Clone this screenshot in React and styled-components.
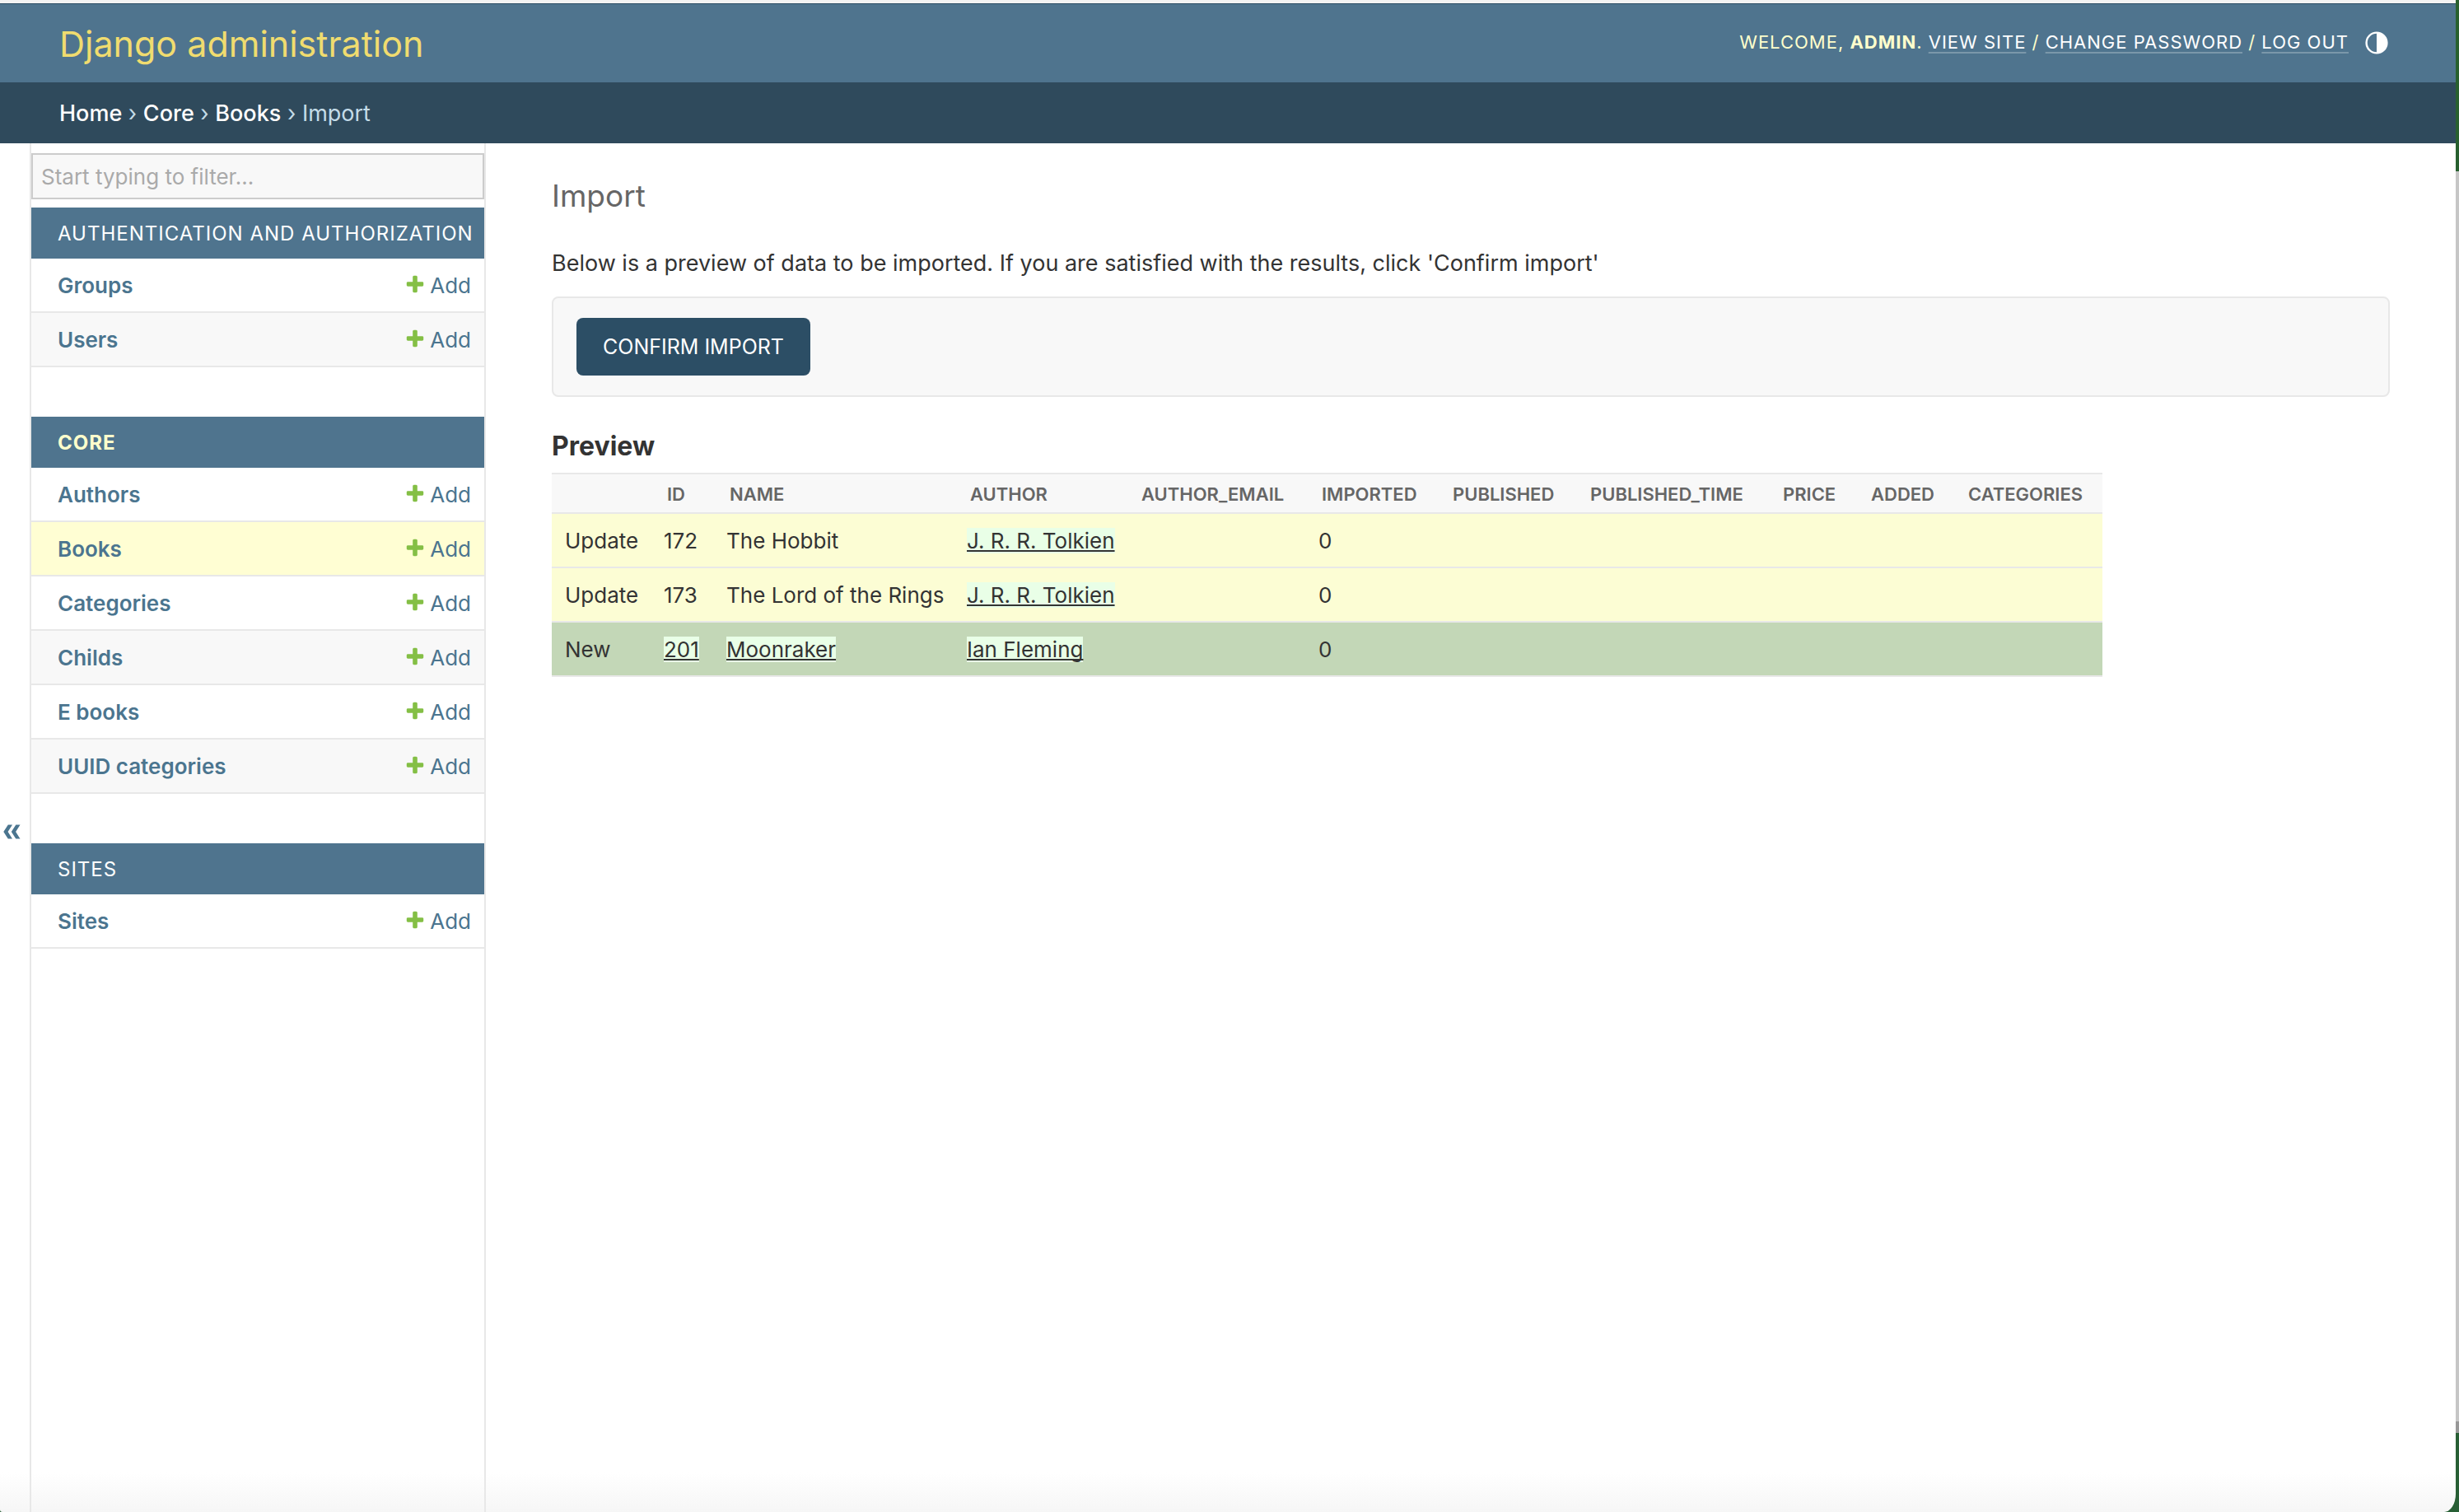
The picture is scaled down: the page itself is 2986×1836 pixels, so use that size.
import React from "react";
import styled, { createGlobalStyle } from "styled-components";

const color = {
  primary: "#4f748e",
  secondary: "#2f4a5c",
  button: "#2c4e65",
  accent: "#f0dc6f",
  pale: "#feffcc",
  link: "#4b758f",
  line: "#e8e8e8",
  soft: "#f8f8f8",
  text: "#333333",
  quiet: "#666666",
  add: "#84bf45",
};

const GlobalStyle = createGlobalStyle`
  *, *::before, *::after { box-sizing: border-box; }
  body {
    margin: 0;
    color: ${color.text};
    font-family: Inter, "Liberation Sans", sans-serif;
    font-size: 26px;
    line-height: 32px;
  }
  a { color: ${color.link}; text-decoration: none; }
  h1, h2, p, ul { margin: 0; padding: 0; }
  button, input { font: inherit; }
`;

const Desktop = styled.div`
  display: flex;
  min-height: 100vh;
  padding-right: 4px;
  background: linear-gradient(
    #28602f 208px,
    #c6c6c6 208px,
    #c6c6c6 calc(100% - 110px),
    #989898 calc(100% - 110px),
    #989898 calc(100% - 96px),
    #285f35 calc(100% - 96px)
  );
`;

const Window = styled.div`
  display: flex;
  flex-direction: column;
  flex: 1;
  min-width: 0;
  border-top: 4px solid #f3f3f3;
  border-radius: 0 0 14px 3px / 0 0 22px 3px;
  background: linear-gradient(#ffffff calc(100% - 48px), #f6f6f6);
`;

const Header = styled.header`
  display: flex;
  align-items: center;
  justify-content: space-between;
  height: 96px;
  padding: 0 80px 0 72px;
  border-top: 1px solid ${color.button};
  background: ${color.primary};
`;

const SiteName = styled.a`
  color: ${color.accent};
  font-size: 43px;
  font-weight: 400;
  line-height: 48px;
`;

const UserTools = styled.div`
  display: flex;
  align-items: center;
  gap: 20px;
  color: ${color.pale};
  font-size: 22px;
  letter-spacing: 1px;
  text-transform: uppercase;
`;

const ToolText = styled.div`
  padding-bottom: 4px;
`;

const ToolLink = styled.a`
  color: #ffffff;
  text-decoration: underline 2px rgba(255, 255, 255, 0.25);
  text-underline-offset: 4px;
  text-decoration-skip-ink: none;
`;

const ThemeToggle = styled.button`
  display: flex;
  width: 30px;
  height: 30px;
  padding: 0 2px 2px 0;
  border: 0;
  background: none;
  color: #ffffff;
`;

const Breadcrumbs = styled.nav`
  display: flex;
  align-items: center;
  height: 74px;
  padding: 2px 72px 0;
  background: ${color.secondary};
  color: #c4dce8;
  font-size: 27px;
`;

const Crumb = styled.a`
  color: #ffffff;
  font-weight: 500;
`;

const Body = styled.div`
  display: flex;
  flex: 1;
`;

const SidebarToggle = styled.button`
  display: flex;
  align-items: center;
  justify-content: center;
  width: 38px;
  padding: 10px 8px 0 0;
  border: 0;
  border-right: 2px solid ${color.line};
  background: none;
  color: ${color.link};
`;

const Sidebar = styled.nav`
  width: 552px;
  flex-shrink: 0;
  padding-top: 12px;
  border-right: 2px solid ${color.line};
`;

const Filter = styled.input`
  display: block;
  width: 100%;
  height: 56px;
  margin-bottom: 10px;
  padding: 0 10px;
  border: 2px solid #cccccc;
  border-radius: 0;
  background: ${color.soft};
  &::placeholder { color: #aaaaaa; opacity: 1; }
`;

const Module = styled.section`
  margin-bottom: 60px;
`;

const ModuleTitle = styled.h2`
  padding: 16px 0 14px 32px;
  background: ${color.primary};
  font-size: 24px;
  font-weight: ${(p) => (p.$current ? 700 : 400)};
  letter-spacing: 1px;
  text-transform: uppercase;
  white-space: nowrap;
  a { color: ${(p) => (p.$current ? color.pale : "#ffffff")}; }
`;

const ModelList = styled.ul`
  list-style: none;
`;

const ModelRow = styled.li`
  display: flex;
  align-items: center;
  justify-content: space-between;
  height: 66px;
  padding: 2px 16px 0 32px;
  border-bottom: 2px solid ${color.line};
  background: ${(p) => (p.$current ? "#fffed3" : "transparent")};
  &:nth-child(even) {
    background: ${(p) => (p.$current ? "#fffed3" : color.soft)};
  }
`;

const ModelLink = styled.a`
  font-weight: 600;
`;

const AddLink = styled.a`
  display: flex;
  align-items: center;
  gap: 5px;
  svg { margin-bottom: 4px; }
`;

const Main = styled.main`
  flex: 1;
  min-width: 0;
  padding: 40px 80px 60px;
`;

const PageTitle = styled.h1`
  margin-bottom: 38px;
  color: ${color.quiet};
  font-size: 37px;
  font-weight: 400;
  line-height: 48px;
`;

const Intro = styled.p`
  margin-bottom: 20px;
  font-size: 27px;
  line-height: 40px;
`;

const SubmitRow = styled.form`
  padding: 24px 28px;
  border: 2px solid ${color.line};
  border-radius: 8px;
  background: ${color.soft};
`;

const ConfirmButton = styled.button`
  display: block;
  height: 70px;
  padding: 0 32px;
  border: 0;
  border-radius: 8px;
  background: ${color.button};
  color: #ffffff;
  font-size: 25px;
  text-transform: uppercase;
`;

const SectionTitle = styled.h2`
  margin: 40px 0 12px;
  font-size: 32px;
  font-weight: 700;
  line-height: 40px;
`;

const PreviewTable = styled.table`
  width: 1883px;
  max-width: 100%;
  table-layout: fixed;
  border-collapse: separate;
  border-spacing: 0;
  text-align: left;
`;

const Column = styled.col`
  width: ${(p) => p.$width}px;
`;

const HeadCell = styled.th`
  height: 50px;
  padding: 2px 0 0 20px;
  border: solid ${color.line};
  border-width: 2px 0;
  background: ${color.soft};
  color: ${color.quiet};
  font-size: 22px;
  font-weight: 600;
  text-transform: uppercase;
`;

const PreviewRow = styled.tr`
  background: ${(p) => (p.$kind === "New" ? "#c3d7b7" : "#fcfdd4")};
`;

const Cell = styled.td`
  height: 66px;
  padding: 2px 0 0 16px;
  border-bottom: 2px solid ${color.line};
  white-space: nowrap;
`;

const Inserted = styled.ins`
  background: #e9ffe7;
  text-decoration: underline 2px;
  text-underline-offset: 2px;
  text-decoration-skip-ink: none;
`;

const modules = [
  { name: "Authentication and Authorization", models: ["Groups", "Users"] },
  {
    name: "Core",
    current: true,
    models: ["Authors", "Books", "Categories", "Childs", "E books", "UUID categories"],
  },
  { name: "Sites", models: ["Sites"] },
];

const columns = [
  ["", 120],
  ["id", 76],
  ["name", 292],
  ["author", 208],
  ["author_email", 219],
  ["imported", 159],
  ["published", 167],
  ["published_time", 234],
  ["price", 107],
  ["added", 118],
  ["categories", 183],
];

const added = (text) => ({ text, added: true });

const rows = [
  ["Update", "172", "The Hobbit", added("J. R. R. Tolkien"), "", "0", "", "", "", "", ""],
  ["Update", "173", "The Lord of the Rings", added("J. R. R. Tolkien"), "", "0", "", "", "", "", ""],
  ["New", added("201"), added("Moonraker"), added("Ian Fleming"), "", "0", "", "", "", "", ""],
];

function PlusIcon() {
  return (
    <svg width="26" height="26" viewBox="0 0 1792 1792" aria-hidden="true">
      <path
        fill={color.add}
        d="M1600 796v192q0 40-28 68t-68 28h-416v416q0 40-28 68t-68 28h-192q-40 0-68-28t-28-68v-416h-416q-40 0-68-28t-28-68v-192q0-40 28-68t68-28h416v-416q0-40 28-68t68-28h192q40 0 68 28t28 68v416h416q40 0 68 28t28 68z"
      />
    </svg>
  );
}

function HalfCircleIcon() {
  return (
    <svg width="28" height="28" viewBox="0 0 28 28" aria-hidden="true">
      <circle cx="14" cy="14" r="12.4" fill="none" stroke="currentColor" strokeWidth="2.4" />
      <path d="M14 1.5a12.5 12.5 0 0 1 0 25z" fill="currentColor" />
    </svg>
  );
}

function ChevronsIcon() {
  return (
    <svg width="21" height="18" viewBox="0 0 21 18" aria-hidden="true">
      <path
        fill="currentColor"
        d="M5.8 0.4h5.2L5.600 9l5.400 8.600h-5.200L0.300 9zM15.300 0.400h5.200L15.100 9l5.400 8.600h-5.200L9.800 9z"
      />
    </svg>
  );
}

export default function App() {
  return (
    <>
      <GlobalStyle />
      <Desktop>
        <Window>
          <Header>
            <SiteName href="#">Django administration</SiteName>
            <UserTools>
              <ToolText>
                Welcome, <strong>admin</strong>. <ToolLink href="#">View site</ToolLink>
                {" / "}
                <ToolLink href="#">Change password</ToolLink>
                {" / "}
                <ToolLink href="#">Log out</ToolLink>
              </ToolText>
              <ThemeToggle type="button" aria-label="Toggle theme">
                <HalfCircleIcon />
              </ThemeToggle>
            </UserTools>
          </Header>
          <Breadcrumbs aria-label="Breadcrumbs">
            <div>
              <Crumb href="#">Home</Crumb> › <Crumb href="#">Core</Crumb> ›{" "}
              <Crumb href="#">Books</Crumb> › Import
            </div>
          </Breadcrumbs>
          <Body>
            <SidebarToggle type="button" aria-label="Toggle navigation">
              <ChevronsIcon />
            </SidebarToggle>
            <Sidebar aria-label="Sidebar">
              <Filter
                type="text"
                placeholder="Start typing to filter..."
                aria-label="Filter navigation items"
              />
              {modules.map((module) => (
                <Module key={module.name}>
                  <ModuleTitle $current={module.current}>
                    <a href="#">{module.name}</a>
                  </ModuleTitle>
                  <ModelList>
                    {module.models.map((model) => (
                      <ModelRow key={model} $current={model === "Books"}>
                        <ModelLink href="#">{model}</ModelLink>
                        <AddLink href="#">
                          <PlusIcon />
                          Add
                        </AddLink>
                      </ModelRow>
                    ))}
                  </ModelList>
                </Module>
              ))}
            </Sidebar>
            <Main>
              <PageTitle>Import</PageTitle>
              <Intro>
                Below is a preview of data to be imported. If you are satisfied with the results,
                click 'Confirm import'
              </Intro>
              <SubmitRow onSubmit={(event) => event.preventDefault()}>
                <ConfirmButton type="submit">Confirm import</ConfirmButton>
              </SubmitRow>
              <SectionTitle>Preview</SectionTitle>
              <PreviewTable>
                <colgroup>
                  {columns.map(([name, width]) => (
                    <Column key={name} $width={width} />
                  ))}
                </colgroup>
                <thead>
                  <tr>
                    {columns.map(([name]) => (
                      <HeadCell key={name} scope="col">
                        {name}
                      </HeadCell>
                    ))}
                  </tr>
                </thead>
                <tbody>
                  {rows.map((row) => (
                    <PreviewRow key={row[2].text || row[2]} $kind={row[0]}>
                      {row.map((cell, index) => (
                        <Cell key={index}>
                          {cell.added ? <Inserted>{cell.text}</Inserted> : cell}
                        </Cell>
                      ))}
                    </PreviewRow>
                  ))}
                </tbody>
              </PreviewTable>
            </Main>
          </Body>
        </Window>
      </Desktop>
    </>
  );
}
